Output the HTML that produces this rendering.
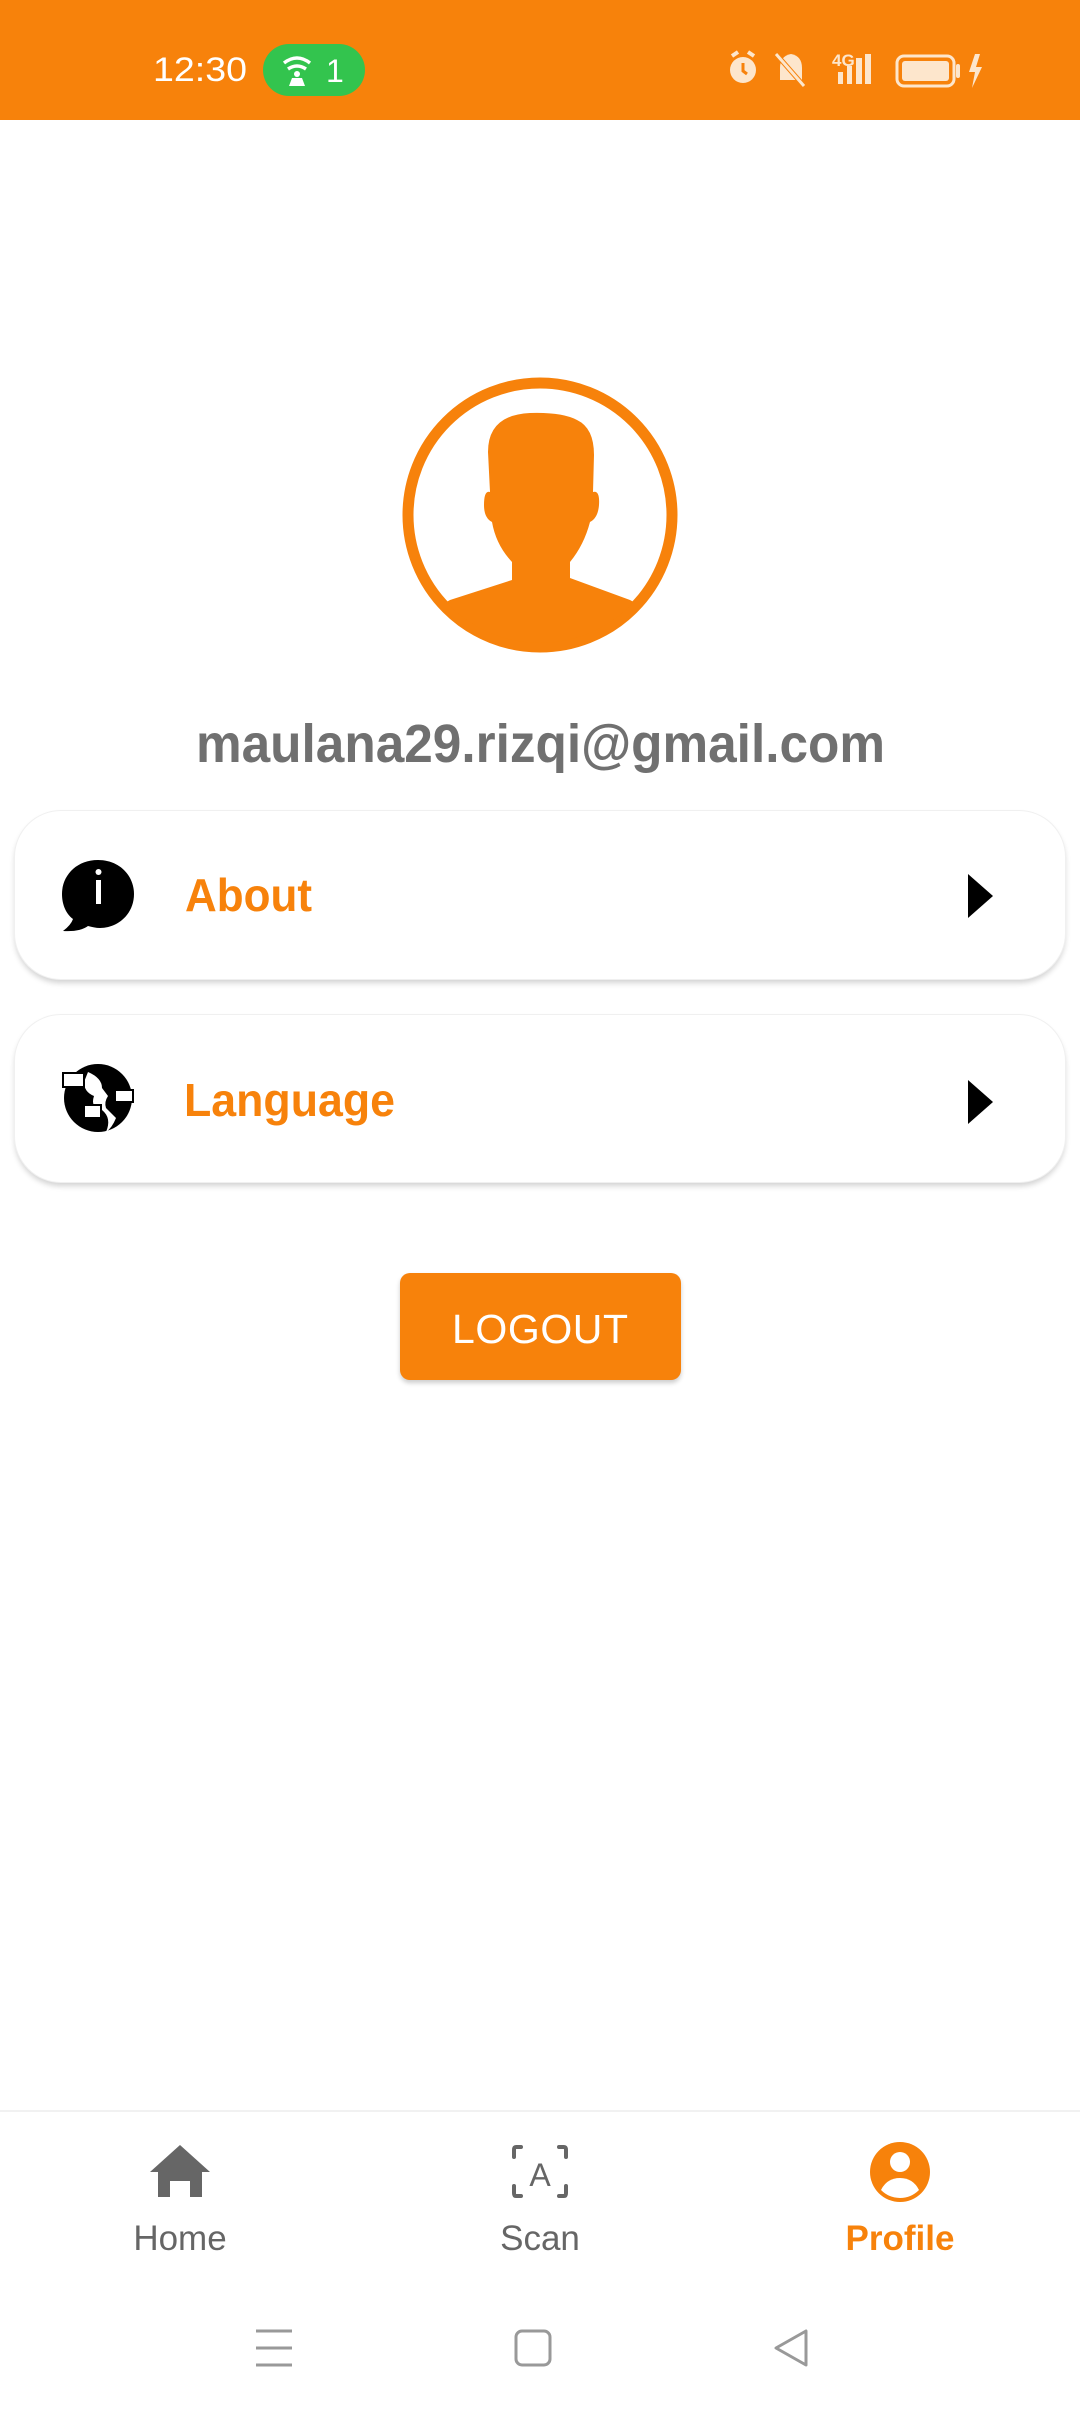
<!DOCTYPE html>
<html><head><meta charset="utf-8">
<style>
html,body{margin:0;padding:0;width:1080px;height:2412px;background:#fff;overflow:hidden;font-family:"Liberation Sans",sans-serif;}
.abs{position:absolute;}
.card{position:absolute;left:15px;width:1050px;background:#fff;border-radius:46px;box-shadow:0 0 0 1px #f0f0f0,0 4px 6px rgba(0,0,0,0.18);}
</style></head><body>
<div class="abs" style="left:0;top:0;width:1080px;height:120px;background:#F7820B"></div>
<svg class="abs" style="left:0;top:0" width="1080" height="2412" viewBox="0 0 1080 2412">
 <!-- status bar -->
 <text x="153" y="81" font-size="34" fill="#fff" font-family="Liberation Sans" textLength="94" lengthAdjust="spacingAndGlyphs">12:30</text>
 <rect x="263" y="44" width="102" height="52" rx="26" fill="#33C44E"/>
 <path d="M284 63 q13 -10 26 0 M288 69 q9 -6 18 0" stroke="#fff" stroke-width="3.5" fill="none"/>
 <circle cx="297" cy="74" r="3" fill="#fff"/>
 <path d="M289 86 l3 -8 h10 l3 8 z" fill="#fff"/>
 <text x="326" y="82" font-size="32" fill="#fff" font-family="Liberation Sans">1</text>
 <g fill="#FDE6CC">
  <circle cx="743" cy="70" r="13"/>
  <path d="M732 56 l6 -4 M754 56 l-6 -4" stroke="#FDE6CC" stroke-width="4"/>
  <path d="M743 63 v8 l4 3" stroke="#F7820B" stroke-width="3" fill="none"/>
  <path d="M780 80 v-12 q0 -12 11 -14 q11 2 11 14 v12 z"/>
  <path d="M776 54 l28 32" stroke="#F7820B" stroke-width="5"/>
  <path d="M776 54 l28 32" stroke="#FDE6CC" stroke-width="3"/>
  <text x="832" y="66" font-size="17" font-weight="bold" font-family="Liberation Sans">4G</text>
  <rect x="838" y="72" width="5" height="12"/><rect x="847" y="66" width="5" height="18"/><rect x="856" y="58" width="6" height="26"/><rect x="865" y="54" width="6" height="30"/>
  <rect x="897" y="56" width="57" height="30" rx="7" fill="none" stroke="#FDE6CC" stroke-width="3"/>
  <rect x="902" y="61" width="47" height="20" rx="3"/>
  <rect x="956" y="64" width="4" height="14" rx="2"/>
  <path d="M975 54 l-6 18 h6 l-3 16 l10 -21 h-6 l4 -13 z"/>
 </g>
 <!-- avatar -->
 <circle cx="540" cy="515" r="132" fill="none" stroke="#F7820B" stroke-width="11"/>
 <clipPath id="cc"><circle cx="540" cy="515" r="128"/></clipPath>
 <g fill="#F7820B" clip-path="url(#cc)">
  <path d="M512 580 L512 562 Q496 545 492 522 Q484 518 484 505 Q484 490 490 492 L488 452 Q488 415 530 413 Q562 412 577 420 Q594 428 594 455 L593 492 Q600 490 599 505 Q598 518 590 522 Q584 545 570 562 L570 578 L630 600 L700 640 L700 700 L380 700 L380 640 L450 600 Z"/>
 </g>
 <!-- email -->
 <text x="196" y="762" font-size="54" font-weight="bold" fill="#707070" font-family="Liberation Sans" textLength="689" lengthAdjust="spacingAndGlyphs">maulana29.rizqi@gmail.com</text>
</svg>
<div class="card" style="top:811px;height:168px"></div>
<div class="card" style="top:1015px;height:167px"></div>
<div class="abs" style="left:400px;top:1273px;width:281px;height:107px;background:#F7820B;border-radius:10px;box-shadow:0 3px 5px rgba(0,0,0,0.2)"></div>
<div class="abs" style="left:0;top:2110px;width:1080px;height:2px;background:#f1f1f1"></div>
<svg class="abs" style="left:0;top:0" width="1080" height="2412" viewBox="0 0 1080 2412">
 <!-- about icon -->
 <path d="M98 860 c22 0 36 16 36 34 c0 20 -16 34 -34 34 c-4 0 -8 -1 -12 -2 q-8 6 -25 5 q8 -6 10 -12 c-8 -6 -11 -16 -11 -25 c0 -18 14 -34 36 -34 z" fill="#000"/>
 <rect x="96" y="880" width="5" height="24" fill="#fff"/><circle cx="98.5" cy="872" r="3" fill="#fff"/>
 <text x="185" y="911" font-size="46" font-weight="bold" fill="#F7820B" font-family="Liberation Sans" textLength="127" lengthAdjust="spacingAndGlyphs">About</text>
 <path d="M968 874 l25 22 l-25 22 z" fill="#000"/>
 <!-- language icon -->
 <circle cx="98" cy="1098" r="34" fill="#000"/>
 <path d="M88 1072 q14 6 14 16 l6 8 q-4 6 -2 12 l10 10 q-4 10 -10 14 q6 -14 -4 -22 q-12 -2 -8 -14 q-10 -4 -10 -14 z" fill="#fff"/>
 <rect x="63" y="1073" width="21" height="14" fill="#fff" stroke="#000" stroke-width="2"/>
 <rect x="115" y="1090" width="18" height="12" fill="#fff" stroke="#000" stroke-width="2"/>
 <rect x="84" y="1105" width="17" height="13" fill="#fff" stroke="#000" stroke-width="2"/>
 <text x="184" y="1116" font-size="46" font-weight="bold" fill="#F7820B" font-family="Liberation Sans" textLength="211" lengthAdjust="spacingAndGlyphs">Language</text>
 <path d="M968 1080 l25 22 l-25 22 z" fill="#000"/>
 <!-- logout -->
 <text x="452" y="1343" font-size="41" fill="#fff" font-family="Liberation Sans" textLength="176" lengthAdjust="spacing">LOGOUT</text>
 <!-- bottom nav -->
 <path d="M180 2145 l30 27 h-8 v25 h-12 v-16 h-20 v16 h-12 v-25 h-8 z" fill="#666"/>
 <g fill="none" stroke="#666" stroke-width="4" stroke-linecap="round">
  <path d="M521 2147 h-5 q-2 0 -2 3 v7 M559 2147 h5 q2 0 2 3 v7 M514 2186 v7 q0 3 2 3 h5 M566 2186 v7 q0 3 -2 3 h-5"/>
 </g>
 <text x="540" y="2186" font-size="32" fill="#666" text-anchor="middle" font-family="Liberation Sans">A</text>
 <circle cx="900" cy="2172" r="30" fill="#F7820B"/>
 <circle cx="900" cy="2162" r="10" fill="#fff"/>
 <path d="M881 2190 q6 -12 19 -12 q13 0 19 12 q-8 8 -19 8 q-11 0 -19 -8 z" fill="#fff"/>
 <text x="180" y="2250" font-size="35" fill="#666" text-anchor="middle" font-family="Liberation Sans">Home</text>
 <text x="540" y="2250" font-size="35" fill="#666" text-anchor="middle" font-family="Liberation Sans">Scan</text>
 <text x="900" y="2250" font-size="35" font-weight="bold" fill="#F7820B" text-anchor="middle" font-family="Liberation Sans">Profile</text>
 <!-- system nav -->
 <g fill="none" stroke="#999" stroke-width="3">
  <path d="M256 2331 h36 M256 2348 h36 M256 2365 h36"/>
  <rect x="516" y="2331" width="34" height="34" rx="6"/>
  <path d="M806 2331 v34 l-30 -17 z" stroke-linejoin="round"/>
 </g>
</svg>
</body></html>
